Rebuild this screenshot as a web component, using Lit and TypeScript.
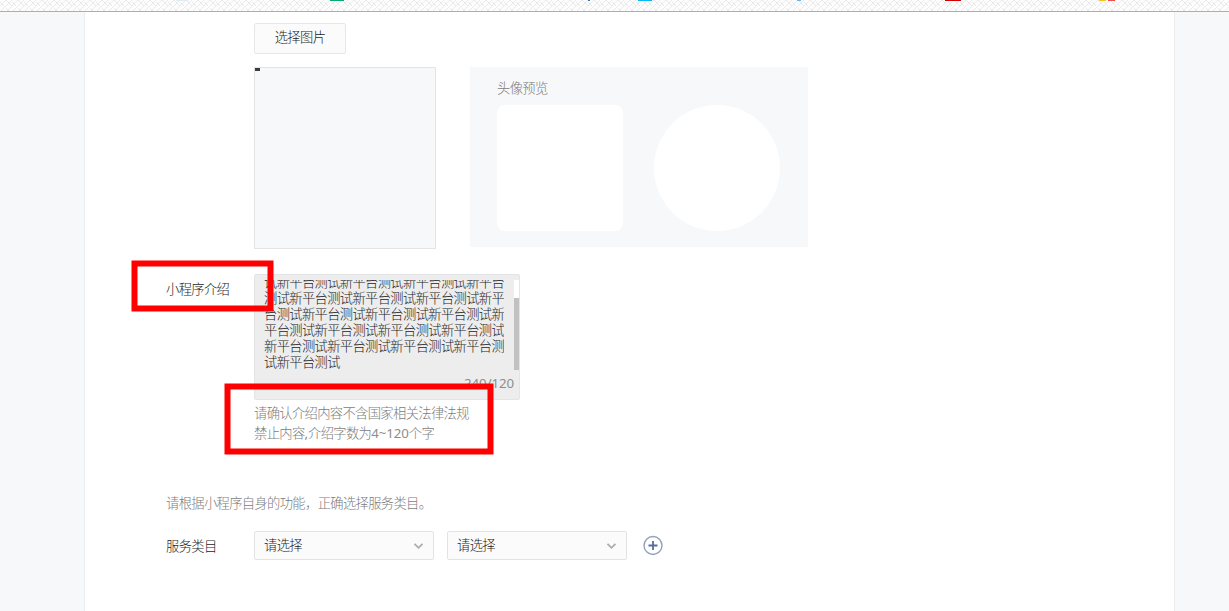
import { LitElement, html, css, svg } from "lit";
import { customElement } from "lit/decorators.js";

@customElement("app-root")
export class AppRoot extends LitElement {
  static styles = css`
    :host {
      display: block;
      position: relative;
      box-sizing: border-box;
      width: 1229px;
      height: 611px;
      overflow: hidden;
      background: #f7f8fa;
      color: #1c1c1c;
      font: 13.3px/20px "Noto Sans CJK SC", sans-serif;
      font-weight: 300;
      letter-spacing: -0.66px;
    }
    *, *::before, *::after { box-sizing: border-box; }
    .strip { display: block; width: 1229px; height: 12px; }
    .page {
      display: flex;
      flex-direction: column;
      width: 1091px;
      height: 599px;
      margin-left: 84px;
      padding: 11px 0 0 81px;
      background: #fff;
      border: 1px solid #ebedf0;
      border-width: 0 1px;
    }
    .btn {
      width: 92px;
      height: 31px;
      margin-left: 88px;
      border: 1px solid #e7e7eb;
      border-radius: 2px;
      background: #fbfbfb;
      text-align: center;
      line-height: 25px;
    }
    .images { display: flex; gap: 34px; margin: 13px 0 0 88px; height: 182px; }
    .crop { width: 182px; height: 182px; border: 1px solid #e2e4e8; background: #f7f8fa; }
    .dot { width: 5px; height: 3px; background: #3c3c40; }
    .preview { width: 338px; height: 180px; padding: 11px 27px 0; background: #f7f8fa; color: #7c7c7c; }
    .shapes { display: flex; gap: 31px; margin-top: 7px; }
    .shape { width: 126px; height: 126px; border-radius: 8px; background: #fff; }
    .round { border-radius: 50%; }
    .row { display: flex; }
    .label { width: 88px; flex: none; }
    .intro { margin-top: 25px; }
    .intro .label { padding-top: 5px; }
    .area {
      display: flex;
      flex-direction: column;
      width: 266px;
      height: 126px;
      padding: 5px 0 0 9px;
      border: 1px solid #e3e4e6;
      border-radius: 2px;
      background: #ededed;
    }
    .scroller { display: flex; justify-content: space-between; height: 90px; }
    .lines { height: 90px; overflow: hidden; display: flex; flex-direction: column; justify-content: flex-end; line-height: 16px; white-space: nowrap; }
    .lines p { margin: 0; }
    .track { width: 5px; height: 90px; padding-top: 18px; background: #fff; }
    .thumb { width: 5px; height: 72px; background: #c1c1c1; }
    .count { padding: 3px 5px 0 0; text-align: right; color: #8d8d8d; }
    .latin { font-family: "Noto Sans", sans-serif; font-size: 13.3px; font-weight: 400; letter-spacing: -0.1px; }
    .hint .latin { color: #8d8d8d; line-height: 1; }
    .hint { margin: 3px 0 0 88px; color: #7c7c7c; }
    .note { margin-top: 50px; color: #7c7c7c; }
    .category { margin-top: 18px; align-items: center; }
    .select {
      display: flex;
      align-items: center;
      justify-content: space-between;
      width: 180px;
      height: 29px;
      margin-right: 13px;
      padding: 0 9px;
      border: 1px solid #e1e4e6;
      border-radius: 2px;
      background: #fbfbfb;
    }
    .select span { padding-bottom: 2px; }
    .plus { margin: 0 0 1px 3px; }
    .marks { position: absolute; left: 0; top: 0; pointer-events: none; }
  `;

  private lines = [
    "试新平台测试新平台测试新平台测试新平台",
    "测试新平台测试新平台测试新平台测试新平",
    "台测试新平台测试新平台测试新平台测试新",
    "平台测试新平台测试新平台测试新平台测试",
    "新平台测试新平台测试新平台测试新平台测",
    "试新平台测试",
  ];

  private tabs: [number, number, string][] = [
    [176, 12, "#deedf3"],
    [330, 14, "#06a878"],
    [588, 2, "#2b7fc8"],
    [638, 14, "#08b8f5"],
    [797, 4, "#62b5f5"],
    [945, 16, "#d10000"],
    [1099, 7, "#fcc021"],
    [1108, 7, "#ef5048"],
  ];

  private select() {
    return html`<div class="select">
      <span>请选择</span>
      <svg width="11" height="8" viewBox="0 0 11 8"><path d="M1.5 1.8 5.5 5.8 9.5 1.8" fill="none" stroke="#adadad" stroke-width="1.8" /></svg>
    </div>`;
  }

  render() {
    return html`
      <svg class="strip" viewBox="0 0 1229 12">
        <defs>
          <pattern id="weave" width="12" height="12" patternUnits="userSpaceOnUse">
            <path d="M0 6 6 0M0 12 12 0M6 12 12 6M0 2 4 6M6 0 12 6M6 8 10 12" stroke="#e5e5e5" stroke-width=".8" fill="none" />
          </pattern>
        </defs>
        <rect width="1229" height="12" fill="#fdfdfd" />
        <rect width="1229" height="12" fill="url(#weave)" />
        ${this.tabs.map(([x, w, c]) => svg`<rect x=${x} width=${w} height="1" fill=${c} />`)}
        <rect y="11" width="1229" height="1" fill="#acafb1" />
      </svg>
      <main class="page">
        <div class="btn">选择图片</div>
        <div class="images">
          <div class="crop"><div class="dot"></div></div>
          <div class="preview">
            <div>头像预览</div>
            <div class="shapes"><div class="shape"></div><div class="shape round"></div></div>
          </div>
        </div>
        <div class="row intro">
          <div class="label">小程序介绍</div>
          <div class="area">
            <div class="scroller">
              <div class="lines"><p>${this.lines.map((l, i) => (i ? html`<br />${l}` : l))}</p></div>
              <div class="track"><div class="thumb"></div></div>
            </div>
            <div class="count latin">240/120</div>
          </div>
        </div>
        <div class="hint">请确认介绍内容不含国家相关法律法规<br />禁止内容<span class="latin">,</span>介绍字数为<span class="latin">4~120</span>个字</div>
        <div class="note">请根据小程序自身的功能，正确选择服务类目。</div>
        <div class="row category">
          <div class="label">服务类目</div>
          ${this.select()}${this.select()}
          <svg class="plus" width="20" height="21" viewBox="0 0 20 21" fill="none">
            <circle cx="10" cy="10.5" r="9" stroke="#8f9fbd" stroke-width="1.4" />
            <path d="M5.5 10.5h9M10 6v9" stroke="#556f9d" stroke-width="1.8" />
          </svg>
        </div>
      </main>
      <svg class="marks" width="1229" height="611" fill="none" stroke="#f00" stroke-width="6">
        <rect x="134.5" y="263.5" width="136" height="45" />
        <rect x="227.5" y="386.5" width="263" height="65" />
      </svg>
    `;
  }
}
